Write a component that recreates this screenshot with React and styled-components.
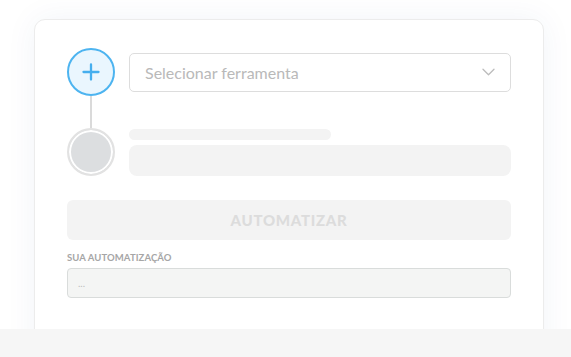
import React from 'react';
import styled, { createGlobalStyle } from 'styled-components';

const GlobalStyles = createGlobalStyle`
  html, body {
    margin: 0;
    padding: 0;
    background: #ffffff;
    font-family: 'Lato', 'Open Sans', sans-serif;
  }
`;

const Page = styled.div`
  width: 571px;
  height: 357px;
  display: flex;
  flex-direction: column;
  overflow: hidden;
`;

const Stage = styled.div`
  height: 329px;
  padding-top: 19px;
  box-sizing: border-box;
  overflow: hidden;
  display: flex;
  justify-content: center;
  padding-left: 34px;
  padding-right: 27px;
`;

const Card = styled.div`
  flex: 1;
  height: 360px;
  background: #fff;
  border: 1px solid #ececec;
  border-radius: 11px;
  box-shadow: 0 0 32px rgba(40, 70, 130, 0.06);
  padding: 28px 32px 0 32px;
  box-sizing: border-box;
`;

const Step = styled.div`
  display: grid;
  grid-template-columns: 48px 1fr;
  column-gap: 14px;
  align-items: center;
`;

const Node = styled.div`
  width: 48px;
  height: 48px;
  border-radius: 50%;
  box-sizing: border-box;
  display: flex;
  align-items: center;
  justify-content: center;
  border: 2px solid ${p => (p.$active ? '#4db4f0' : '#e2e2e2')};
  background: ${p => (p.$active ? '#eaf6fe' : '#dcdee0')};
  box-shadow: ${p => (p.$active ? 'none' : 'inset 0 0 0 2px #fff')};
`;

const Connector = styled.div`
  width: 2px;
  height: 32px;
  margin-left: 23px;
  background: #dadada;
`;

const Select = styled.div`
  height: 39px;
  border: 1px solid #dddddd;
  border-radius: 5px;
  box-sizing: border-box;
  display: flex;
  align-items: center;
  justify-content: space-between;
  padding: 0 15px 0 15px;
  font-size: 16px;
  color: #b9b9b9;
`;

const Skeletons = styled.div`
  display: flex;
  flex-direction: column;
  gap: 5px;
`;

const Bone = styled.div`
  width: ${p => p.$w || '100%'};
  height: ${p => p.$h}px;
  border-radius: ${p => p.$r}px;
  background: #f3f3f3;
`;

const Button = styled.button`
  margin-top: 24px;
  width: 100%;
  height: 40px;
  border: none;
  border-radius: 6px;
  background: #f3f3f3;
  color: #dcdcdc;
  font-family: 'Lato', sans-serif;
  font-weight: 900;
  font-size: 15px;
  letter-spacing: 0.7px;
  cursor: default;
`;

const Label = styled.div`
  margin-top: 12px;
  font-size: 9.5px;
  font-weight: 700;
  color: #a6a6a6;
  line-height: 12px;
  letter-spacing: 0.1px;
`;

const Output = styled.div`
  margin-top: 4px;
  height: 30px;
  box-sizing: border-box;
  border: 1px solid #d9dcdb;
  border-radius: 4px;
  background: #f4f5f4;
  display: flex;
  align-items: center;
  padding-left: 10px;
  font-size: 10px;
  color: #bdbdbd;
`;

const Footer = styled.div`
  flex: 1;
  background: #f6f6f6;
`;

const Plus = () => (
  <svg width="18" height="18" viewBox="0 0 18 18">
    <path d="M9 1.5v15M1.5 9h15" stroke="#45aeee" strokeWidth="2.3" strokeLinecap="round" />
  </svg>
);

const Chevron = () => (
  <svg width="13" height="8" viewBox="0 0 13 8">
    <path d="M1 1.2l5.5 5.5 5.5-5.5" fill="none" stroke="#bcbcbc" strokeWidth="1.3" strokeLinecap="round" strokeLinejoin="round" />
  </svg>
);

export default function App() {
  return (
    <Page>
      <GlobalStyles />
      <Stage>
        <Card>
          <Step>
            <Node $active>
              <Plus />
            </Node>
            <Select>
              <span>Selecionar ferramenta</span>
              <Chevron />
            </Select>
          </Step>
          <Connector />
          <Step>
            <Node />
            <Skeletons>
              <Bone $w="202px" $h={11} $r={6} />
              <Bone $h={31} $r={8} />
            </Skeletons>
          </Step>
          <Button>AUTOMATIZAR</Button>
          <Label>SUA AUTOMATIZAÇÃO</Label>
          <Output>...</Output>
        </Card>
      </Stage>
      <Footer />
    </Page>
  );
}
